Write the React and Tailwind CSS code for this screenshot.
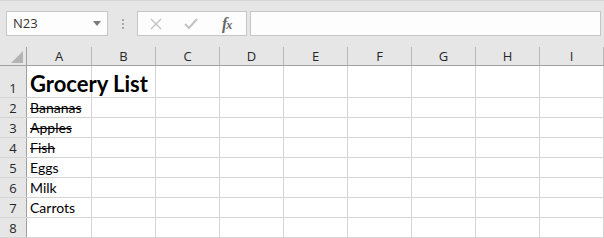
import React from 'react'

const COLS = ['A', 'B', 'C', 'D', 'E', 'F', 'G', 'H', 'I']
const ROWS = [
  { n: 1, text: 'Grocery List', title: true },
  { n: 2, text: 'Bananas', done: true },
  { n: 3, text: 'Apples', done: true },
  { n: 4, text: 'Fish', done: true },
  { n: 5, text: 'Eggs' },
  { n: 6, text: 'Milk' },
  { n: 7, text: 'Carrots' },
  { n: 8, text: '' },
]

function NameBox() {
  return (
    <div className="ml-[6px] w-[102px] h-[25px] bg-[#fdfdfd] border border-[#c6c6c6] flex items-center justify-between pl-[6px] pr-[6px]">
      <span className="text-[13px] text-[#333] font-['Open_Sans',sans-serif]">N23</span>
      <svg width="8" height="5" viewBox="0 0 8 5"><path d="M0 0h8L4 5z" fill="#7a7a7a" /></svg>
    </div>
  )
}

function FormulaButtons() {
  return (
    <div className="ml-[13px] w-[110px] h-[25px] bg-[#fdfdfd] border border-[#c6c6c6] flex items-center">
      <svg className="ml-[12px]" width="12" height="12" viewBox="0 0 12 12">
        <path d="M1 1l10 10M11 1L1 11" stroke="#c2c2c2" strokeWidth="1.4" />
      </svg>
      <svg className="ml-[22px]" width="14" height="11" viewBox="0 0 14 11">
        <path d="M1 6l4 4L13 1" stroke="#c2c2c2" strokeWidth="2" fill="none" />
      </svg>
      <span className="ml-[24px] text-[16px] italic font-semibold text-[#666] font-['Liberation_Serif',serif] tracking-[-1px] leading-none">
        f<span className="text-[12px]">x</span>
      </span>
    </div>
  )
}

function Cell({ row, i }) {
  const widthCls = i === 0 ? 'w-[65px]' : 'w-[64px]'
  if (i !== 0 || !row.text) return <div className={`${widthCls} shrink-0 border-r border-[#d4d4d4]`} />
  return (
    <div className={`${widthCls} shrink-0 border-r border-[#d4d4d4] relative`}>
      <span
        className={
          row.title
            ? "absolute left-[3px] bottom-[2px] whitespace-nowrap text-[22px] font-bold leading-none text-black font-['Lato',sans-serif]"
            : `absolute left-[3px] bottom-[2px] whitespace-nowrap text-[14px] leading-none text-black font-['Lato',sans-serif] ${row.done ? 'line-through' : ''}`
        }
      >
        {row.text}
      </span>
    </div>
  )
}

export default function App() {
  return (
    <div className="w-[604px] h-[238px] bg-[#e6e6e6] overflow-hidden border-t border-[#d6d6d6] font-['Open_Sans',sans-serif]">
      {/* formula bar */}
      <div className="h-[46px] pt-[10px] flex items-start">
        <NameBox />
        <div className="ml-[14px] mt-[8px] flex flex-col gap-[2px]">
          <div className="w-[2px] h-[2px] bg-[#a8a8a8]" />
          <div className="w-[2px] h-[2px] bg-[#a8a8a8]" />
          <div className="w-[2px] h-[2px] bg-[#a8a8a8]" />
        </div>
        <FormulaButtons />
        <div className="ml-[3px] w-[351px] h-[25px] bg-[#fdfdfd] border border-[#c6c6c6]" />
      </div>

      {/* column headers */}
      <div className="flex h-[19px] border-b border-[#a0a0a0]">
        <div className="w-[27px] shrink-0 border-r border-[#a0a0a0] relative">
          <svg className="absolute left-[11px] top-[4px]" width="12" height="12" viewBox="0 0 12 12">
            <path d="M12 0V12H0z" fill="#b4b4b4" />
          </svg>
        </div>
        {COLS.map((c, i) => (
          <div
            key={c}
            className={`${i === 0 ? 'w-[65px]' : 'w-[64px]'} shrink-0 border-r border-[#b8b8b8] flex items-center justify-center text-[13px] text-[#262626] leading-none pt-[1px]`}
          >
            {c}
          </div>
        ))}
      </div>

      {/* rows */}
      {ROWS.map(row => (
        <div key={row.n} className={`flex ${row.n === 1 ? 'h-[32px]' : 'h-[20px]'} border-b border-[#d4d4d4]`}>
          <div className="w-[27px] shrink-0 bg-[#e6e6e6] border-r border-[#a0a0a0] flex items-end justify-center pb-[2px] text-[13px] leading-none text-[#262626]">
            {row.n}
          </div>
          <div className="flex flex-1 bg-white">
            {COLS.map((c, i) => (
              <Cell key={c} row={row} i={i} />
            ))}
          </div>
        </div>
      ))}
    </div>
  )
}
